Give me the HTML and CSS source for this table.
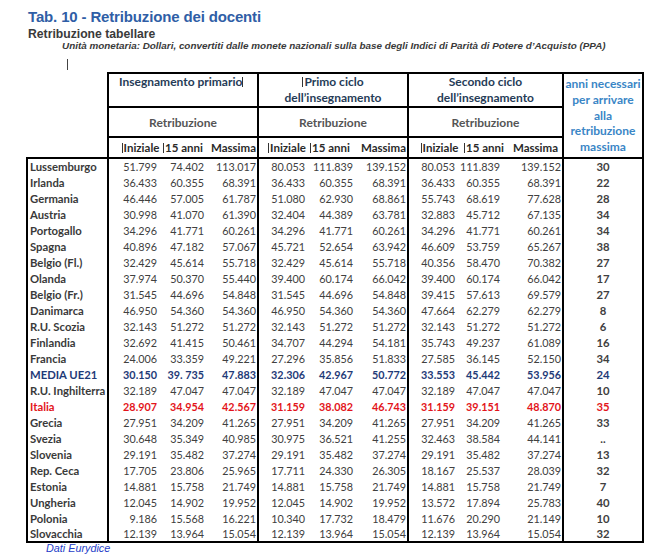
FILE: index.html
```html
<!DOCTYPE html>
<html lang="it">
<head>
<meta charset="utf-8">
<title>Tab. 10 - Retribuzione dei docenti</title>
<link rel="stylesheet" href="styles.css">
</head>
<body>
<div class="page">
  <h1 class="title">Tab. 10 - Retribuzione dei docenti</h1>
  <h2 class="subtitle">Retribuzione tabellare</h2>
  <p class="unit">Unità monetaria: Dollari, convertiti dalle monete nazionali sulla base degli Indici di Parità di Potere d’Acquisto (PPA)</p>
  <div class="caret"></div>
  <table class="tab">
    <colgroup>
      <col class="w-country">
      <col class="w50"><col class="w47"><col class="w53">
      <col class="w48"><col class="w48"><col class="w54">
      <col class="w48"><col class="w45"><col class="w62">
      <col class="w-anni">
    </colgroup>
    <thead>
      <tr class="hr1">
        <th class="blank" rowspan="3"></th>
        <th class="grp grp-left" colspan="3">Insegnamento primario<i class="bar"></i></th>
        <th class="grp" colspan="3"><i class="bar"></i>Primo ciclo<br>dell’insegnamento</th>
        <th class="grp" colspan="3">Secondo ciclo<br>dell’insegnamento</th>
        <th class="anni" rowspan="3">anni necessari<br>per arrivare<br>alla<br>retribuzione<br>massima</th>
      </tr>
      <tr class="hr2">
        <th class="retr" colspan="3">Retribuzione</th>
        <th class="retr" colspan="3">Retribuzione</th>
        <th class="retr" colspan="3">Retribuzione</th>
      </tr>
      <tr class="hr3">
        <th class="subs" colspan="3"><div class="subrow s1"><span class="sub"><i class="bar"></i>Iniziale</span><span class="sub"><i class="bar"></i>15 anni</span><span class="max">Massima</span></div></th>
        <th class="subs" colspan="3"><div class="subrow s2"><span class="sub"><i class="bar"></i>Iniziale</span><span class="sub"><i class="bar"></i>15 anni</span><span class="max">Massima</span></div></th>
        <th class="subs" colspan="3"><div class="subrow s3"><span class="sub"><i class="bar"></i>Iniziale</span><span class="sub"><i class="bar"></i>15 anni</span><span class="max">Massima</span></div></th>
      </tr>
    </thead>
    <tbody>
      <tr class="first"><td class="cn">Lussemburgo</td><td>51.799</td><td>74.402</td><td class="ge">113.017</td><td>80.053</td><td>111.839</td><td class="ge">139.152</td><td>80.053</td><td>111.839</td><td class="ge">139.152</td><td class="av">30</td></tr>
      <tr><td class="cn">Irlanda</td><td>36.433</td><td>60.355</td><td class="ge">68.391</td><td>36.433</td><td>60.355</td><td class="ge">68.391</td><td>36.433</td><td>60.355</td><td class="ge">68.391</td><td class="av">22</td></tr>
      <tr><td class="cn">Germania</td><td>46.446</td><td>57.005</td><td class="ge">61.787</td><td>51.080</td><td>62.930</td><td class="ge">68.861</td><td>55.743</td><td>68.619</td><td class="ge">77.628</td><td class="av">28</td></tr>
      <tr><td class="cn">Austria</td><td>30.998</td><td>41.070</td><td class="ge">61.390</td><td>32.404</td><td>44.389</td><td class="ge">63.781</td><td>32.883</td><td>45.712</td><td class="ge">67.135</td><td class="av">34</td></tr>
      <tr><td class="cn">Portogallo</td><td>34.296</td><td>41.771</td><td class="ge">60.261</td><td>34.296</td><td>41.771</td><td class="ge">60.261</td><td>34.296</td><td>41.771</td><td class="ge">60.261</td><td class="av">34</td></tr>
      <tr><td class="cn">Spagna</td><td>40.896</td><td>47.182</td><td class="ge">57.067</td><td>45.721</td><td>52.654</td><td class="ge">63.942</td><td>46.609</td><td>53.759</td><td class="ge">65.267</td><td class="av">38</td></tr>
      <tr><td class="cn">Belgio (Fl.)</td><td>32.429</td><td>45.614</td><td class="ge">55.718</td><td>32.429</td><td>45.614</td><td class="ge">55.718</td><td>40.356</td><td>58.470</td><td class="ge">70.382</td><td class="av">27</td></tr>
      <tr><td class="cn">Olanda</td><td>37.974</td><td>50.370</td><td class="ge">55.440</td><td>39.400</td><td>60.174</td><td class="ge">66.042</td><td>39.400</td><td>60.174</td><td class="ge">66.042</td><td class="av">17</td></tr>
      <tr><td class="cn">Belgio (Fr.)</td><td>31.545</td><td>44.696</td><td class="ge">54.848</td><td>31.545</td><td>44.696</td><td class="ge">54.848</td><td>39.415</td><td>57.613</td><td class="ge">69.579</td><td class="av">27</td></tr>
      <tr><td class="cn">Danimarca</td><td>46.950</td><td>54.360</td><td class="ge">54.360</td><td>46.950</td><td>54.360</td><td class="ge">54.360</td><td>47.664</td><td>62.279</td><td class="ge">62.279</td><td class="av">8</td></tr>
      <tr><td class="cn">R.U. Scozia</td><td>32.143</td><td>51.272</td><td class="ge">51.272</td><td>32.143</td><td>51.272</td><td class="ge">51.272</td><td>32.143</td><td>51.272</td><td class="ge">51.272</td><td class="av">6</td></tr>
      <tr><td class="cn">Finlandia</td><td>32.692</td><td>41.415</td><td class="ge">50.461</td><td>34.707</td><td>44.294</td><td class="ge">54.181</td><td>35.743</td><td>49.237</td><td class="ge">61.089</td><td class="av">16</td></tr>
      <tr><td class="cn">Francia</td><td>24.006</td><td>33.359</td><td class="ge">49.221</td><td>27.296</td><td>35.856</td><td class="ge">51.833</td><td>27.585</td><td>36.145</td><td class="ge">52.150</td><td class="av">34</td></tr>
      <tr class="avg"><td class="cn">MEDIA UE21</td><td>30.150</td><td>39. 735</td><td class="ge">47.883</td><td>32.306</td><td>42.967</td><td class="ge">50.772</td><td>33.553</td><td>45.442</td><td class="ge">53.956</td><td class="av">24</td></tr>
      <tr><td class="cn">R.U. Inghilterra</td><td>32.189</td><td>47.047</td><td class="ge">47.047</td><td>32.189</td><td>47.047</td><td class="ge">47.047</td><td>32.189</td><td>47.047</td><td class="ge">47.047</td><td class="av">10</td></tr>
      <tr class="it"><td class="cn">Italia</td><td>28.907</td><td>34.954</td><td class="ge">42.567</td><td>31.159</td><td>38.082</td><td class="ge">46.743</td><td>31.159</td><td>39.151</td><td class="ge">48.870</td><td class="av">35</td></tr>
      <tr><td class="cn">Grecia</td><td>27.951</td><td>34.209</td><td class="ge">41.265</td><td>27.951</td><td>34.209</td><td class="ge">41.265</td><td>27.951</td><td>34.209</td><td class="ge">41.265</td><td class="av">33</td></tr>
      <tr><td class="cn">Svezia</td><td>30.648</td><td>35.349</td><td class="ge">40.985</td><td>30.975</td><td>36.521</td><td class="ge">41.255</td><td>32.463</td><td>38.584</td><td class="ge">44.141</td><td class="av">..</td></tr>
      <tr><td class="cn">Slovenia</td><td>29.191</td><td>35.482</td><td class="ge">37.274</td><td>29.191</td><td>35.482</td><td class="ge">37.274</td><td>29.191</td><td>35.482</td><td class="ge">37.274</td><td class="av">13</td></tr>
      <tr><td class="cn">Rep. Ceca</td><td>17.705</td><td>23.806</td><td class="ge">25.965</td><td>17.711</td><td>24.330</td><td class="ge">26.305</td><td>18.167</td><td>25.537</td><td class="ge">28.039</td><td class="av">32</td></tr>
      <tr><td class="cn">Estonia</td><td>14.881</td><td>15.758</td><td class="ge">21.749</td><td>14.881</td><td>15.758</td><td class="ge">21.749</td><td>14.881</td><td>15.758</td><td class="ge">21.749</td><td class="av">7</td></tr>
      <tr><td class="cn">Ungheria</td><td>12.045</td><td>14.902</td><td class="ge">19.952</td><td>12.045</td><td>14.902</td><td class="ge">19.952</td><td>13.572</td><td>17.894</td><td class="ge">25.783</td><td class="av">40</td></tr>
      <tr><td class="cn">Polonia</td><td>9.186</td><td>15.568</td><td class="ge">16.221</td><td>10.340</td><td>17.732</td><td class="ge">18.479</td><td>11.676</td><td>20.290</td><td class="ge">21.149</td><td class="av">10</td></tr>
      <tr class="last"><td class="cn">Slovacchia</td><td>12.139</td><td>13.964</td><td class="ge">15.054</td><td>12.139</td><td>13.964</td><td class="ge">15.054</td><td>12.139</td><td>13.964</td><td class="ge">15.054</td><td class="av">32</td></tr>
    </tbody>
  </table>
  <p class="source">Dati Eurydice</p>
</div>
</body>
</html>
```

FILE: styles.css
```css
html, body {
  margin: 0;
  padding: 0;
  background: #ffffff;
}

body {
  font-family: "Liberation Sans", Arial, sans-serif;
  color: #333333;
}

.page {
  padding: 0;
}

.title {
  margin: 8px 0 0 28px;
  font-size: 15px;
  line-height: 17px;
  font-weight: bold;
  letter-spacing: -0.15px;
  color: #2f5ea6;
}

.subtitle {
  margin: 2px 0 0 28px;
  font-size: 12.2px;
  line-height: 14px;
  font-weight: bold;
  color: #3a3a3a;
}

.unit {
  margin: -1px 0 0 62px;
  font-size: 9.9px;
  line-height: 12px;
  font-style: italic;
  font-weight: bold;
  color: #3a3a3a;
  white-space: nowrap;
}

.caret {
  margin: 7px 0 0 67px;
  width: 1px;
  height: 11px;
  background: #444444;
}

.tab {
  margin: 2px 0 0 26px;
  border-collapse: collapse;
  table-layout: fixed;
  font-family: Lato, "Open Sans", sans-serif;
  font-size: 10.8px;
  color: #404040;
}

.w-country { width: 81px; }
.w45 { width: 45px; }
.w47 { width: 47px; }
.w48 { width: 48px; }
.w50 { width: 50px; }
.w53 { width: 53px; }
.w54 { width: 54px; }
.w62 { width: 62px; }
.w-anni { width: 80px; }

.tab th {
  padding: 0;
  font-weight: bold;
  font-size: 12px;
}

.blank {
  border: none;
}

.hr1 th {
  height: 31px;
}

.hr2 th {
  height: 28px;
}

.hr3 th {
  height: 19px;
}

.grp {
  border: 2px solid #000000;
  vertical-align: top;
  text-align: center;
  line-height: 16px;
  padding-top: 1px;
  color: #263c57;
}

.tab th.grp.grp-left {
  text-align: left;
  padding-left: 10px;
}

.retr {
  border: 2px solid #000000;
  vertical-align: middle;
  text-align: center;
  color: #555555;
}

.tab th.subs {
  border-left: 2px solid #000000;
  border-right: 2px solid #000000;
  vertical-align: middle;
  font-size: 11.5px;
  color: #2a2a2a;
}

.anni {
  border: 2px solid #000000;
  border-bottom: none;
  vertical-align: middle;
  text-align: center;
  line-height: 15.8px;
  color: #3a86c6;
}

.bar {
  display: inline-block;
  width: 0;
  height: 10px;
  border-left: 1px solid #333333;
  vertical-align: -1px;
  margin-right: 1px;
}

.subrow {
  display: flex;
  align-items: center;
  line-height: 14px;
}

.subrow .sub {
  flex: none;
  white-space: nowrap;
}

.subrow .max {
  margin-left: auto;
}

.s1 { padding: 0 1px 0 9px; }
.s1 .sub:first-child { width: 45px; }

.s2 { padding: 0 1px 0 5px; }
.s2 .sub:first-child { width: 46px; }

.s3 { padding: 0 4px 0 6px; }
.s3 .sub:first-child { width: 49px; }

.tab td {
  height: 15px;
  padding: 1px 1px 0 0;
  line-height: 14px;
  text-align: right;
  white-space: nowrap;
  vertical-align: middle;
}

.tab tr.first td,
.tab tr.last td {
  height: 14px;
}

.tab td.cn {
  text-align: left;
  padding-left: 2px;
  font-weight: bold;
  font-size: 11.3px;
  color: #3a3a3a;
  border-left: 2px solid #000000;
  border-right: 2px solid #000000;
}

.tab td.ge {
  border-right: 2px solid #000000;
}

.tab td.av {
  text-align: center;
  padding-right: 0;
  font-weight: bold;
  font-size: 11.3px;
  border-right: 2px solid #000000;
}

.first td {
  border-top: 2px solid #000000;
}

.last td {
  border-bottom: 2px solid #000000;
}

.avg td,
.avg td.cn {
  color: #1f3b78;
  font-weight: bold;
}

.it td,
.it td.cn {
  color: #e3141b;
  font-weight: bold;
}

.source {
  margin: 0 0 0 46px;
  font-size: 10.8px;
  line-height: 11px;
  font-style: italic;
  color: #2540c8;
}
```
